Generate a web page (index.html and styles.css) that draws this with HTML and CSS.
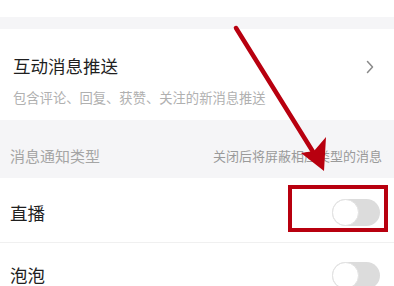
FILE: index.html
```html
<!DOCTYPE html>
<html>
<head>
    <meta charset="UTF-8">
    <title>消息设置</title>
    <link rel="stylesheet" href="styles.css">
</head>
<body>
    <div class="page">
        <div class="top-blank"></div>
        <div class="gap"></div>

        <div class="card push-item">
            <div class="push-text">
                <div class="push-title">互动消息推送</div>
                <div class="push-desc">包含评论、回复、获赞、关注的新消息推送</div>
            </div>
            <svg class="chevron" width="8" height="14" viewBox="0 0 8 14">
                <path d="M1.5 1.5 L6.5 7 L1.5 12.5" fill="none" stroke="#8a8a8a" stroke-width="1.5" stroke-linecap="round" stroke-linejoin="round"/>
            </svg>
        </div>

        <div class="section-head">
            <span class="section-title">消息通知类型</span>
            <span class="section-note">关闭后将屏蔽相应类型的消息</span>
        </div>

        <div class="card">
            <div class="row">
                <span class="row-label">直播</span>
                <span class="toggle"><span class="knob"></span></span>
            </div>
            <div class="row">
                <span class="row-label">泡泡</span>
                <span class="toggle"><span class="knob"></span></span>
            </div>
        </div>

        <!-- annotation drawn over the screenshot -->
        <svg class="annot" width="394" height="286" viewBox="0 0 394 286">
            <line x1="236" y1="28" x2="315" y2="155" stroke="#b8000f" stroke-width="4.5" stroke-linecap="round"/>
            <path d="M324 171 L301 153 L314 151 L326 137 Z" fill="#b8000f"/>
        </svg>
        <div class="highlight"></div>
    </div>
</body>
</html>
```

FILE: styles.css
```css
body {
    margin: 0;
    font-family: "Noto Sans CJK SC", "Noto Sans", sans-serif;
    background: #fff;
}
.page {
    position: relative;
    width: 394px;
    height: 286px;
    overflow: hidden;
    background: #f5f5f7;
}
.top-blank { height: 17px; background: #fff; }
.gap { height: 12px; }
.card { background: #fff; }
.push-item {
    height: 91px;
    display: flex;
    align-items: center;
    justify-content: space-between;
    padding: 0 20px 0 13px;
    box-sizing: border-box;
}
.push-text { display: flex; flex-direction: column; padding-top: 12px; }
.push-title {
    font-size: 17.5px;
    color: #1f1f1f;
    line-height: 24px;
}
.push-desc {
    font-size: 13.3px;
    color: #b0b0b0;
    line-height: 18px;
    margin-top: 11px;
}
.chevron { margin-bottom: 16px; }
.section-head {
    height: 58px;
    display: flex;
    align-items: center;
    justify-content: space-between;
    padding: 12px 12px 0 10px;
    box-sizing: border-box;
}
.section-title { font-size: 15px; color: #a5a5a5; }
.section-note { font-size: 13px; color: #9a9a9a; }
.row {
    height: 65px;
    display: flex;
    align-items: center;
    justify-content: space-between;
    padding: 0 14px 0 10px;
    box-sizing: border-box;
    border-bottom: 1px solid #f0f0f0;
}
.row:first-child { padding-top: 5px; }
.row-label { font-size: 17.5px; line-height: 20px; color: #1f1f1f; }
.toggle {
    width: 48px;
    height: 27px;
    border-radius: 14px;
    background: #dcdcdc;
    position: relative;
    display: block;
}
.knob {
    position: absolute;
    left: 0;
    top: 0;
    width: 27px;
    height: 27px;
    border-radius: 50%;
    background: #fff;
    box-sizing: border-box;
    border: 1px solid #e2e2e2;
}
.annot {
    position: absolute;
    left: 0;
    top: 0;
}
.highlight {
    position: absolute;
    left: 288px;
    top: 185px;
    width: 100px;
    height: 47px;
    box-sizing: border-box;
    border: 4px solid #b8000f;
}
```
